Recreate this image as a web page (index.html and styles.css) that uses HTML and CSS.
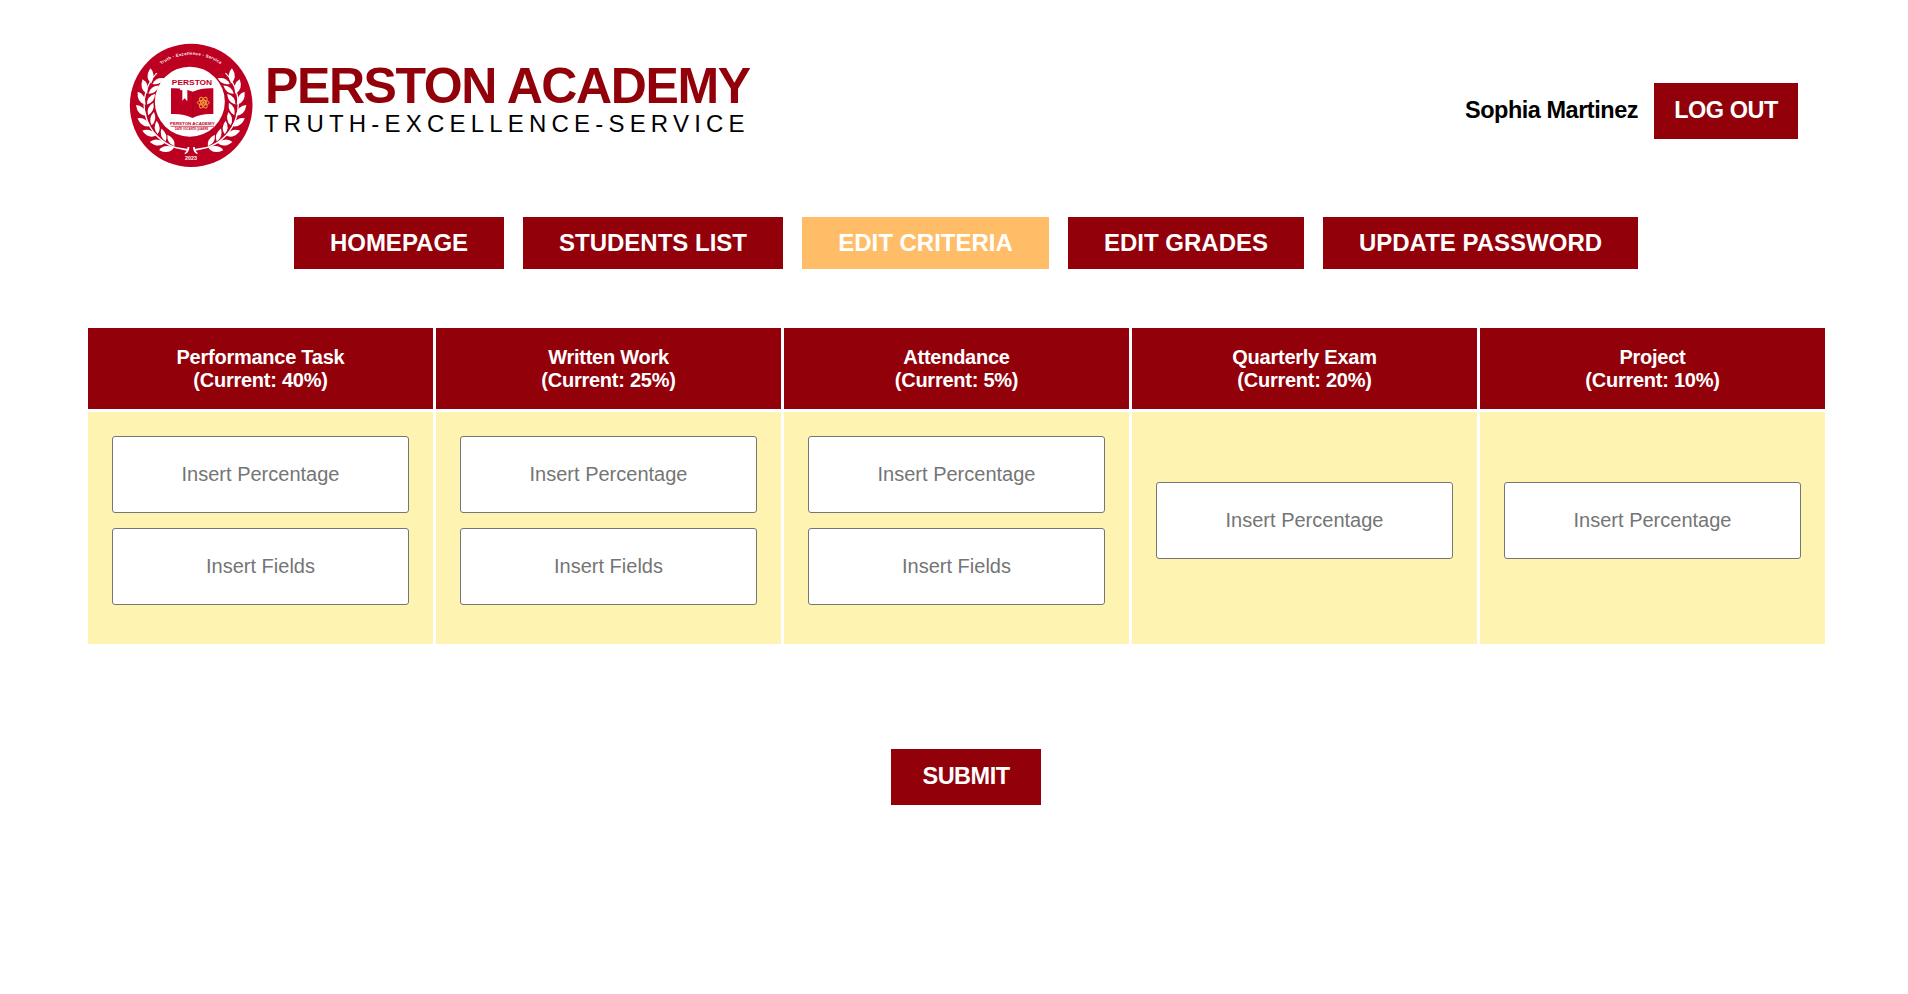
FILE: index.html
```html
<!DOCTYPE html>
<html lang="en">
<head>
<meta charset="utf-8">
<title>Perston Academy - Edit Criteria</title>
<link rel="stylesheet" href="styles.css">
</head>
<body>
<header class="header">
  <div class="brand">
    <svg class="logo" viewBox="0 0 420 420" role="img" aria-label="Perston Academy seal">
      <defs>
        <g id="pair">
          <path d="M203 75Q207 48 240 48Q236 72 203 75Z"/>
          <path d="M204 79Q229 77 238 101Q211 101 204 79Z"/>
        </g>
        <g id="branch" fill="#fff">
          <use href="#pair" transform="rotate(-57 213 211)"/>
          <use href="#pair" transform="rotate(-71 213 211)"/>
          <use href="#pair" transform="rotate(-85 213 211)"/>
          <use href="#pair" transform="rotate(-99 213 211)"/>
          <use href="#pair" transform="rotate(-113 213 211)"/>
          <use href="#pair" transform="rotate(-127 213 211)"/>
          <use href="#pair" transform="rotate(-141 213 211)"/>
          <use href="#pair" transform="rotate(-154 213 211)"/>
          <path d="M112 115A134 134 0 0 0 168 336L204 342V348L166 340A138 138 0 0 1 109 113Z"/>
          <path d="M193 355Q201 350 203 336L208 336Q207 353 196 357Z"/>
        </g>
        <path id="motto" d="M88 125A152 152 0 0 1 338 125"/>
      </defs>
      <ellipse cx="213.500" cy="211" rx="184" ry="185" fill="#bd0022"/>
      <use href="#branch"/>
      <use href="#branch" transform="translate(427 0) scale(-1 1)"/>
      <circle cx="209.500" cy="200" r="105" fill="#fff"/>
      <text class="seal-motto"><textPath href="#motto" startOffset="50%">Truth - Excellence - Service</textPath></text>
      <text class="seal-name" x="216" y="150" textLength="121" lengthAdjust="spacingAndGlyphs">PERSTON</text>
      <path fill="#bd0022" d="M153 160Q190 158 218 170Q246 158 280 160V237Q245 235 217 249Q190 235 153 237Z"/>
      <path fill="#fff" d="M180 157L202 160V199L194 190L187 197V166L180 165Z"/>
      <path d="M218 171V247" stroke="#990019" stroke-width="2"/>
      <g fill="none" stroke="#f2a33c" stroke-width="3">
        <ellipse cx="250" cy="203" rx="18" ry="7"/>
        <ellipse cx="250" cy="203" rx="18" ry="7" transform="rotate(60 250 203)"/>
        <ellipse cx="250" cy="203" rx="18" ry="7" transform="rotate(120 250 203)"/>
      </g>
      <circle cx="250" cy="203" r="4" fill="#f2a33c"/>
      <text class="seal-school" x="217" y="270" textLength="134" lengthAdjust="spacingAndGlyphs">PERSTON ACADEMY</text>
      <path d="M152 274H282" stroke="#bd0022" stroke-width="2"/>
      <text class="seal-sub" x="215" y="285" textLength="100" lengthAdjust="spacingAndGlyphs">DATE VOCANTE QUAERE</text>
      <text class="seal-year" x="213" y="376">2023</text>
    </svg>
    <div class="brand-text">
      <h1 class="brand-name">PERSTON ACADEMY</h1>
      <p class="brand-motto">TRUTH-EXCELLENCE-SERVICE</p>
    </div>
  </div>
  <div class="account">
    <span class="user">Sophia Martinez</span>
    <button class="button logout" type="button">LOG OUT</button>
  </div>
</header>
<nav class="nav">
  <a class="nav-link nav-home">HOMEPAGE</a>
  <a class="nav-link nav-students">STUDENTS LIST</a>
  <a class="nav-link nav-criteria active">EDIT CRITERIA</a>
  <a class="nav-link nav-grades">EDIT GRADES</a>
  <a class="nav-link nav-password">UPDATE PASSWORD</a>
</nav>
<form class="form">
  <div class="criteria">
    <div class="head">Performance Task<br>(Current: 40%)</div>
    <div class="head">Written Work<br>(Current: 25%)</div>
    <div class="head">Attendance<br>(Current: 5%)</div>
    <div class="head">Quarterly Exam<br>(Current: 20%)</div>
    <div class="head">Project<br>(Current: 10%)</div>
    <div class="cell"><input class="field" placeholder="Insert Percentage"><input class="field" placeholder="Insert Fields"></div>
    <div class="cell"><input class="field" placeholder="Insert Percentage"><input class="field" placeholder="Insert Fields"></div>
    <div class="cell"><input class="field" placeholder="Insert Percentage"><input class="field" placeholder="Insert Fields"></div>
    <div class="cell"><input class="field" placeholder="Insert Percentage"></div>
    <div class="cell"><input class="field" placeholder="Insert Percentage"></div>
  </div>
  <button class="button submit" type="button">SUBMIT</button>
</form>
</body>
</html>
```
FILE: styles.css
```css
* { box-sizing: border-box; }

body {
  margin: 0;
  background: #fff;
  color: #000;
  font-family: "Liberation Sans", Arial, sans-serif;
}

.header {
  display: flex;
  justify-content: space-between;
  align-items: flex-start;
  height: 217px;
  padding: 35px 110px 0 120px;
}

.brand { display: flex; }
.logo { width: 140px; height: 140px; }
.brand-text { padding: 25px 0 0 4px; }

.brand-name {
  margin: 0;
  padding-left: 1px;
  color: #92000a;
  font-size: 50px;
  line-height: 52px;
  letter-spacing: -1.4px;
  white-space: nowrap;
}

.brand-motto {
  margin: 0;
  font-size: 24px;
  line-height: 24px;
  letter-spacing: 5.2px;
  white-space: nowrap;
}

.seal-motto, .seal-name, .seal-school, .seal-sub, .seal-year {
  text-anchor: middle;
  font-weight: bold;
  fill: #bd0022;
}
.seal-motto { font-size: 12.5px; letter-spacing: 1px; fill: #fff; }
.seal-name { font-size: 21px; }
.seal-school { font-size: 13px; }
.seal-sub { font-size: 8px; }
.seal-year { font-size: 16px; fill: #fff; }

.account {
  display: flex;
  align-items: flex-start;
  gap: 16px;
  padding-top: 48px;
}
.user {
  font-size: 23.5px;
  font-weight: bold;
  line-height: 54px;
  letter-spacing: -0.48px;
}

.button {
  height: 56px;
  padding: 0 0 1px;
  border: 0;
  background: #92000a;
  color: #fff;
  font: bold 23.5px "Liberation Sans", Arial, sans-serif;
  letter-spacing: -0.5px;
}
.logout { width: 144px; }
.submit { width: 150px; margin: 105px 0 0 891px; }

.nav {
  display: flex;
  gap: 19px;
  padding-left: 294px;
}
.nav-link {
  height: 52px;
  background: #92000a;
  color: #fff;
  font-size: 24px;
  font-weight: bold;
  line-height: 52px;
  text-align: center;
  white-space: nowrap;
}
.nav-link.active { background: #ffbd67; }
.nav-home { width: 210px; }
.nav-students { width: 260px; }
.nav-criteria { width: 247px; }
.nav-grades { width: 236px; }
.nav-password { width: 315px; }

.form { padding-top: 59px; }

.criteria {
  display: grid;
  grid-template-columns: repeat(5, 345px);
  grid-template-rows: 81px 232px;
  gap: 3px;
  margin-left: 88px;
}
.head {
  padding-top: 18px;
  background: #92000a;
  color: #fff;
  font-size: 20px;
  font-weight: bold;
  line-height: 23px;
  letter-spacing: -0.25px;
  text-align: center;
}
.cell {
  display: flex;
  flex-direction: column;
  align-items: center;
  justify-content: center;
  gap: 15px;
  padding-bottom: 15px;
  background: #fff3b2;
}
.field {
  width: 297px;
  height: 77px;
  padding: 0;
  border: 1px solid #767676;
  border-radius: 3px;
  background: #fff;
  font: 20px "Liberation Sans", Arial, sans-serif;
  text-align: center;
}
.field::placeholder { color: #757575; }
```
